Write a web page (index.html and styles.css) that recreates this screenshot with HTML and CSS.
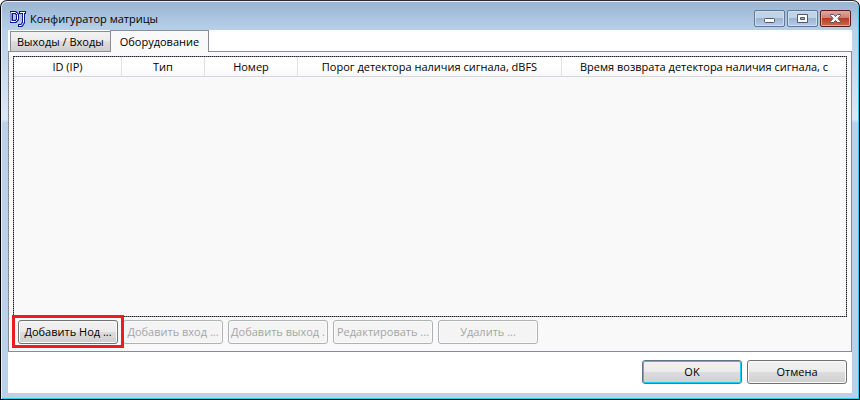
FILE: index.html
```
<!DOCTYPE html>
<html lang="ru">
<head>
    <meta charset="UTF-8">
    <meta name="viewport" content="width=device-width, initial-scale=1.0">
    <title>Конфигуратор матрицы</title>
    <link rel="stylesheet" href="styles.css">
</head>
<body>
    <div class="window">
        <header class="titlebar">
            <svg class="logo" width="18" height="18" viewBox="0 0 18 18">
                <g fill="none" stroke="#14148c" stroke-width="3" stroke-linecap="square">
                    <path d="M2.5 2.5H6.5L8.5 4.5V9.5L6.5 11.5H2.5Z"/>
                    <path d="M11.5 2.5H15.5M14.5 2.5V12.5L12.5 15.5H10.5"/>
                </g>
                <g fill="none" stroke="#fff" stroke-width="1" stroke-linecap="square">
                    <path d="M2.5 2.5H6.5L8.5 4.5V9.5L6.5 11.5H2.5Z"/>
                    <path d="M11.5 2.5H15.5M14.5 2.5V12.5L12.5 15.5H10.5"/>
                </g>
            </svg>
            <h1 class="title">Конфигуратор матрицы</h1>
            <div class="controls">
                <button class="control" type="button" aria-label="Свернуть">
                    <svg width="13" height="11" viewBox="0 0 13 11"><rect x="1.5" y="5.5" width="10" height="4" rx="1" fill="#fff" stroke="#535666"/></svg>
                </button>
                <button class="control" type="button" aria-label="Развернуть">
                    <svg width="13" height="11" viewBox="0 0 13 11"><path d="M1.5 1.5H11.5V9.5H1.5Z M4.5 4.5V6.5H8.5V4.5Z" fill="#fff" stroke="#535666" fill-rule="evenodd"/></svg>
                </button>
                <button class="control close" type="button" aria-label="Закрыть">
                    <svg width="13" height="11" viewBox="0 0 13 11"><path d="M1.5 1.5H4.5L6.5 3.5L8.5 1.5H11.5V2.5L9 5.5L11.5 8.5V9.5H8.5L6.5 7.5L4.5 9.5H1.5V8.5L4 5.5L1.5 2.5Z" fill="#fff" stroke="#535666"/></svg>
                </button>
            </div>
        </header>

        <main class="content">
            <div class="tabs" role="tablist">
                <button class="tab" type="button" role="tab" aria-selected="false">Выходы / Входы</button>
                <button class="tab active" type="button" role="tab" aria-selected="true">Оборудование</button>
            </div>

            <section class="panel" role="tabpanel">
                <div class="list">
                    <table class="devices">
                        <colgroup>
                            <col class="col-id">
                            <col class="col-type">
                            <col class="col-number">
                            <col class="col-threshold">
                            <col class="col-return">
                        </colgroup>
                        <thead>
                            <tr>
                                <th>ID (IP)</th>
                                <th>Тип</th>
                                <th>Номер</th>
                                <th>Порог детектора наличия сигнала, dBFS</th>
                                <th>Время возврата детектора наличия сигнала, с</th>
                            </tr>
                        </thead>
                    </table>
                </div>
                <div class="actions">
                    <div class="marked"><button class="btn" type="button">Добавить Нод ...</button></div>
                    <button class="btn" type="button" disabled>Добавить вход ...</button>
                    <button class="btn" type="button" disabled>Добавить выход .</button>
                    <button class="btn" type="button" disabled>Редактировать ...</button>
                    <button class="btn" type="button" disabled>Удалить ...</button>
                </div>
            </section>

            <footer class="footer">
                <button class="btn default" type="button">OK</button>
                <button class="btn" type="button">Отмена</button>
            </footer>
        </main>
    </div>
</body>
</html>
```
FILE: styles.css
```
* {
    box-sizing: border-box;
}

body {
    margin: 0;
    height: 100vh;
    background-color: #fff;
    font-family: "Open Sans", "Noto Sans", sans-serif;
    font-size: 11px;
    line-height: 16px;
    color: #000;
}

button {
    font: inherit;
    color: inherit;
}

.window {
    display: flex;
    flex-direction: column;
    height: 100%;
    padding: 0 6px 6px;
    border: 1px solid #000;
    border-top-color: #2b2b33;
    border-radius: 7px 7px 0 0;
    background: linear-gradient(#99b4d1, #b9d1ea 30px, #dbe8f6 118px, #b9d1ea 122px);
    box-shadow: inset 0 1px #e9f1fa, inset 1px 0 #e3eefa, inset -1px -1px #2fd0ee;
}

.titlebar {
    display: flex;
    align-items: center;
    height: 29px;
    padding: 6px 2px 0;
}

.title {
    margin: 0 auto 0 3px;
    font-size: 11px;
    font-weight: normal;
}

.controls {
    display: flex;
    gap: 2px;
}

.control {
    display: flex;
    align-items: center;
    justify-content: center;
    width: 31px;
    height: 17px;
    padding: 0;
    border: 1px solid #627894;
    border-radius: 2px;
    background: linear-gradient(#c1d3e7 50%, #9bb4d0 50%, #b6cee8);
    box-shadow: inset 0 0 0 1px #cddff0;
}

.close {
    border-color: #5a1a20;
    background: linear-gradient(#dba093 10%, #cb7a6b 50%, #b83b26 50%, #cc6b4c);
    box-shadow: inset 0 0 0 1px #dda89c;
}

.content {
    display: flex;
    flex: 1;
    flex-direction: column;
    margin: 0 1px;
    background-color: #fff;
}

.tabs {
    display: flex;
    align-items: flex-end;
    height: 22px;
    padding-left: 2px;
}

.tab {
    height: 20px;
    margin-bottom: 1px;
    padding: 0 6px;
    border: 1px solid #898c95;
    border-width: 1px 0 0 1px;
    background: linear-gradient(#f2f2f2, #ebebeb 50%, #ddd 50%, #cfcfcf);
    white-space: nowrap;
}

.active {
    z-index: 1;
    height: 22px;
    margin-bottom: 0;
    padding: 0 9px;
    border-right-width: 1px;
    background: #f9f9f9;
}

.panel {
    display: flex;
    flex: 1;
    flex-direction: column;
    margin-top: -1px;
    padding: 4px;
    border: 1px solid #898c95;
    background-color: #f9f9f9;
}

.list {
    flex: 1;
    border: 1px dotted #22222c;
    background: linear-gradient(#f9f9f9, #f9f9f9) padding-box, #8a8a94 border-box;
}

.devices {
    width: 100%;
    table-layout: fixed;
    border-collapse: separate;
    border-spacing: 0;
}

.col-id {
    width: 108px;
}

.col-type {
    width: 83px;
}

.col-number {
    width: 93px;
}

.col-threshold {
    width: 264px;
}

.devices th {
    height: 20px;
    padding: 0;
    border-right: 1px solid #dfe1e3;
    border-bottom: 1px solid #d5d5d5;
    background: linear-gradient(#fff 50%, #f7f8fa);
    font-weight: normal;
    text-align: center;
    white-space: nowrap;
}

.devices th:last-child {
    border-right: 0;
}

.actions {
    display: flex;
    gap: 5px;
    padding: 3px 5px;
}

.btn {
    width: 100px;
    height: 24px;
    padding: 0;
    border: 1px solid #707070;
    border-radius: 3px;
    background: linear-gradient(#f2f2f2, #ebebeb 50%, #ddd 50%, #cfcfcf);
    box-shadow: inset 0 0 0 1px #fbfbfb;
    white-space: nowrap;
}

.btn:disabled {
    border-color: #adb2b5;
    background: #f4f4f4;
    color: #a5a5a5;
}

.default {
    border-color: #5b7582;
    box-shadow: inset 0 0 0 1px #22c9f5;
}

.marked {
    position: relative;
}

/* red frame over the button */
.marked::after {
    content: "";
    position: absolute;
    inset: -5px -6px -4px;
    border: 3px solid #ed1c24;
    pointer-events: none;
}

.footer {
    display: flex;
    justify-content: flex-end;
    gap: 5px;
    padding: 8px 5px 9px;
}
```
